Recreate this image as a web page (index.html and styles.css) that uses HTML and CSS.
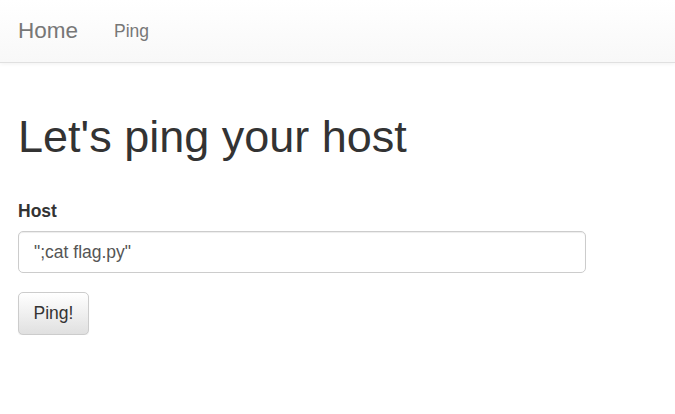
FILE: index.html
```html
<!DOCTYPE html>
<html>
<head>
<meta charset="utf-8">
<title>Ping</title>
<link rel="stylesheet" href="styles.css">
</head>
<body>
<div class="navbar">
  <a class="brand" href="#">Home</a>
  <a class="navlink" href="#">Ping</a>
</div>

<div class="container">
  <h1>Let's ping your host</h1>
  <form class="ping-form">
    <label for="host">Host</label>
    <input type="text" id="host" class="form-control" value="&quot;;cat flag.py&quot;">
    <button type="button" class="btn">Ping!</button>
  </form>
</div>
</body>
</html>
```

FILE: styles.css
```css
body { margin: 0; font-family: "Liberation Sans", Arial, sans-serif; font-size: 17.5px; line-height: 1.42857; color: #333; background: #fff; }
a { text-decoration: none; }

.navbar { display: flex; align-items: center; height: 62px; padding-left: 18px; background-image: linear-gradient(to bottom, #fff 0, #f8f8f8 100%); border-bottom: 1px solid #e0e0e0; box-shadow: 0 1px 4px rgba(0,0,0,0.06); }
.brand { font-size: 22.5px; color: #777; }
.navlink { font-size: 17.5px; color: #777; margin-left: 36px; }

.container { padding: 0 18px; }
h1 { font-size: 45px; font-weight: 500; line-height: 1.1; margin: 49px 0 37px; color: #333; }

.ping-form { display: flex; flex-direction: column; align-items: flex-start; }
label { font-weight: bold; margin-bottom: 8px; }
.form-control { box-sizing: border-box; width: 568px; height: 42px; padding: 0 15px; font-family: inherit; font-size: 17.5px; color: #555; border: 1px solid #ccc; border-radius: 5px; box-shadow: inset 0 1px 1px rgba(0,0,0,0.075); margin: 0 0 19px; }
.btn { box-sizing: border-box; height: 43px; width: 71px; padding: 0; font-family: inherit; font-size: 17.5px; color: #333; border: 1px solid #ccc; border-radius: 5px; background-image: linear-gradient(to bottom, #fff 0, #e0e0e0 100%); box-shadow: inset 0 1px 0 rgba(255,255,255,0.15), 0 1px 1px rgba(0,0,0,0.075); }
```
